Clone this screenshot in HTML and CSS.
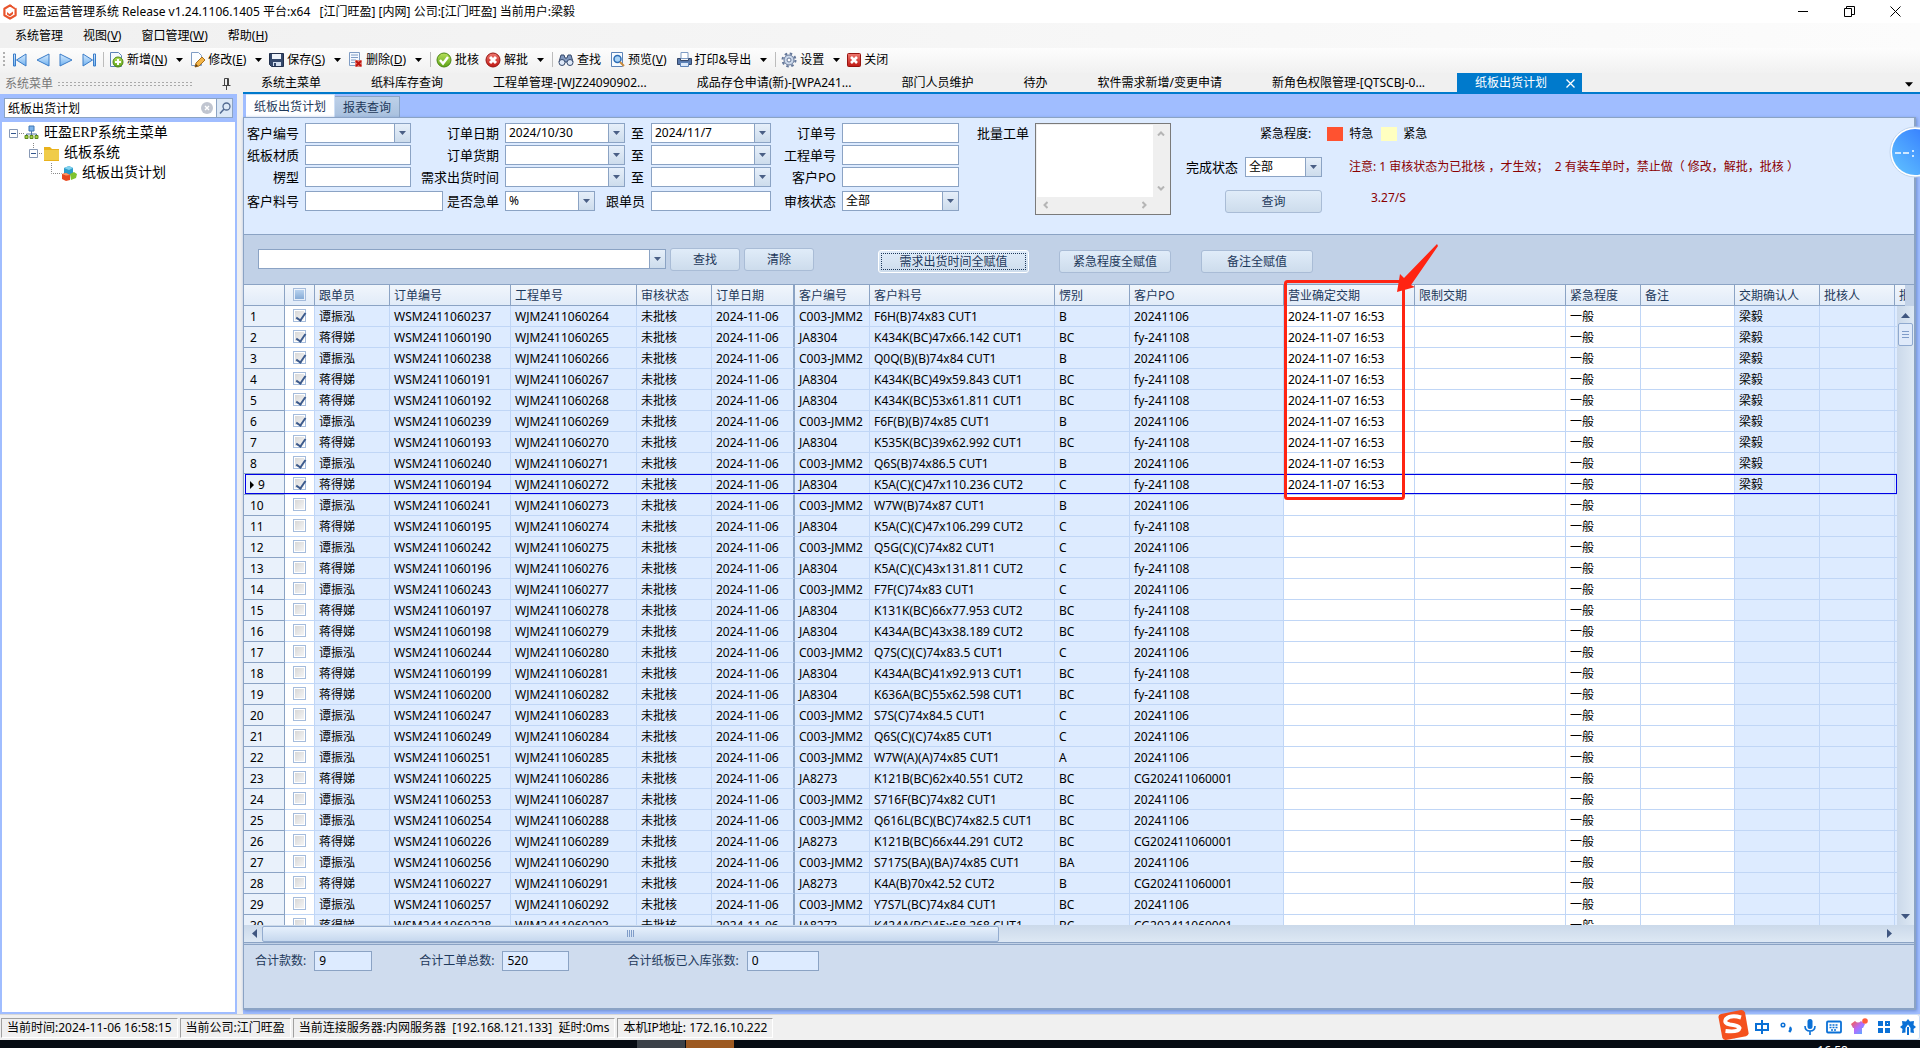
FILE: index.html
```html
<!DOCTYPE html>
<html lang="zh-CN">
<head>
    <meta charset="UTF-8">
    <meta name="viewport" content="width=device-width, initial-scale=1.0">
    <title>旺盈运营管理系统</title>
    <link rel="stylesheet" href="styles.css">
</head>
<body>

    <!-- Shared gradients and symbols -->
    <svg class="defs" width="0" height="0" aria-hidden="true">
        <defs>
            <linearGradient id="gBlue" x1="0" y1="0" x2="0" y2="1"><stop offset="0" stop-color="#d8ecff"/><stop offset="1" stop-color="#6fb0ee"/></linearGradient>
            <linearGradient id="gGreen" x1="0" y1="0" x2="0" y2="1"><stop offset="0" stop-color="#b6e05a"/><stop offset="1" stop-color="#5ea318"/></linearGradient>
            <linearGradient id="gRed" x1="0" y1="0" x2="0" y2="1"><stop offset="0" stop-color="#ef7a72"/><stop offset="1" stop-color="#bf1712"/></linearGradient>
            <linearGradient id="gOrb" x1="0" y1="1" x2="1" y2="0"><stop offset="0" stop-color="#62c4ff"/><stop offset="1" stop-color="#2f74ff"/></linearGradient>
            <linearGradient id="gShirt" x1="0" y1="0" x2="1" y2="1"><stop offset="0" stop-color="#ff5b3a"/><stop offset="0.5" stop-color="#b36bff"/><stop offset="1" stop-color="#49b8ff"/></linearGradient>
        </defs>
        <symbol id="down" viewBox="0 0 7 4"><path d="M0 0h7L3.5 4z"/></symbol>
    </svg>

    <!-- Title bar -->
    <header class="title-bar">
        <svg class="app-logo" viewBox="0 0 16 16" width="16" height="16"><path d="M8 1.4l5.6 3.3v6.6L8 14.6l-5.6-3.3V4.7z" fill="none" stroke="#e8542c" stroke-width="2.2" stroke-linejoin="round"/><path d="M5 8l2.5 2L11 7.500V10l-3 2.500L5 10.500z" fill="#e8542c"/><path d="M10 1l4 3" stroke="#fff" stroke-width="1"/></svg>
        <h1>旺盈运营管理系统 Release v1.24.1106.1405 平台:x64&nbsp;&nbsp; [江门旺盈] [内网] 公司:[江门旺盈] 当前用户:梁毅</h1>
        <div class="win-controls">
            <button type="button" aria-label="最小化"><svg width="11" height="11" viewBox="0 0 11 11"><path d="M0 5.500h10"/></svg></button>
            <button type="button" aria-label="还原"><svg width="11" height="11" viewBox="0 0 11 11"><path d="M.5 2.500h7v8h-7zM2.500 2.500v-2h8v8h-3"/></svg></button>
            <button type="button" aria-label="关闭窗口"><svg width="11" height="11" viewBox="0 0 11 11"><path d="M.5.5l10 10M10.500.5l-10 10"/></svg></button>
        </div>
    </header>

    <nav class="menu-bar">
        <button type="button">系统管理</button>
        <button type="button">视图(<u>V</u>)</button>
        <button type="button">窗口管理(<u>W</u>)</button>
        <button type="button">帮助(<u>H</u>)</button>
    </nav>

    <!-- Toolbar -->
    <div class="tool-bar">
        <span class="grip"></span>
        <button type="button" class="nav-btn" aria-label="首条"><svg width="16" height="14" viewBox="0 0 16 14"><path d="M1.500 1h2v12h-2zM14 1v12L4.500 7z" fill="url(#gBlue)" stroke="#3a7cc8"/></svg></button>
        <button type="button" class="nav-btn" aria-label="上一条"><svg width="16" height="14" viewBox="0 0 16 14"><path d="M14 1v12L2 7z" fill="url(#gBlue)" stroke="#3a7cc8"/></svg></button>
        <button type="button" class="nav-btn" aria-label="下一条"><svg width="16" height="14" viewBox="0 0 16 14"><path d="M2 1v12l12-6z" fill="url(#gBlue)" stroke="#3a7cc8"/></svg></button>
        <button type="button" class="nav-btn" aria-label="末条"><svg width="16" height="14" viewBox="0 0 16 14"><path d="M2 1v12l9.500-6zM12.500 1h2v12h-2z" fill="url(#gBlue)" stroke="#3a7cc8"/></svg></button>
        <span class="sep"></span>
        <button type="button" class="tool-btn"><svg width="15" height="16" viewBox="0 0 15 16"><path d="M1.500.5h8l3 3v11h-11z" fill="#f5f9ff" stroke="#5c83b8"/><circle cx="9" cy="10" r="5" fill="url(#gGreen)" stroke="#4c8613"/><path d="M9 7v6M6 10h6" stroke="#fff" stroke-width="2"/></svg><span>新增(<u>N</u>)</span></button>
        <button type="button" class="drop" aria-label="新增选项"><svg width="7" height="4"><use href="#down"/></svg></button>
        <button type="button" class="tool-btn"><svg width="15" height="16" viewBox="0 0 15 16"><path d="M1.500.5h7l3 3v10h-10z" fill="#fbfdff" stroke="#7f9cc4"/><path d="M5 15l1-4 6-6 3 3-6 6z" fill="#f3b548" stroke="#a86f1c"/><path d="M5 15l1-3 2 2z" fill="#5b3b16"/></svg><span>修改(<u>E</u>)</span></button>
        <button type="button" class="drop" aria-label="修改选项"><svg width="7" height="4"><use href="#down"/></svg></button>
        <button type="button" class="tool-btn"><svg width="15" height="16" viewBox="0 0 15 16"><path d="M.5 1.500h14v13h-12l-2-2z" fill="#34486b" stroke="#22304c"/><path d="M3 2h9v5H3z" fill="#eef3fa"/><path d="M4 10h8v4H4z" fill="#d3deee"/><path d="M5 11h2v3H5z" fill="#34486b"/></svg><span>保存(<u>S</u>)</span></button>
        <button type="button" class="drop" aria-label="保存选项"><svg width="7" height="4"><use href="#down"/></svg></button>
        <button type="button" class="tool-btn"><svg width="15" height="16" viewBox="0 0 15 16"><path d="M1.500.5h10v13h-10z" fill="#f5f9ff" stroke="#7f9cc4"/><path d="M3 3h7M3 5.500h7M3 8h5M3 10.500h4" stroke="#7f9cc4"/><path d="M7 8h7v7H7z" fill="#e08a84"/><path d="M8 9l5 5M13 9l-5 5" stroke="#c3130d" stroke-width="2"/></svg><span>删除(<u>D</u>)</span></button>
        <button type="button" class="drop" aria-label="删除选项"><svg width="7" height="4"><use href="#down"/></svg></button>
        <span class="sep"></span>
        <button type="button" class="tool-btn"><svg width="16" height="16" viewBox="0 0 16 16"><circle cx="8" cy="8" r="7" fill="url(#gGreen)" stroke="#4c8613"/><path d="M4 8l3 3.500L12 5" fill="none" stroke="#fff" stroke-width="2.400"/></svg><span>批核</span></button>
        <button type="button" class="tool-btn"><svg width="16" height="16" viewBox="0 0 16 16"><circle cx="8" cy="8" r="7" fill="url(#gRed)" stroke="#961410"/><path d="M5 5l6 6M11 5l-6 6" stroke="#fff" stroke-width="3"/></svg><span>解批</span></button>
        <button type="button" class="drop" aria-label="解批选项"><svg width="7" height="4"><use href="#down"/></svg></button>
        <span class="sep"></span>
        <button type="button" class="tool-btn"><svg width="16" height="16" viewBox="0 0 16 16"><path d="M3 3h3l1 3h2l1-3h3l2 7H1z" fill="#8299bf" stroke="#34486b"/><circle cx="4" cy="10.500" r="3" fill="#dfe9f8" stroke="#34486b"/><circle cx="12" cy="10.500" r="3" fill="#dfe9f8" stroke="#34486b"/></svg><span>查找</span></button>
        <button type="button" class="tool-btn view-btn"><svg width="14" height="16" viewBox="0 0 14 16"><path d="M.5.5h11v14H.5z" fill="#f7fbff" stroke="#5c83b8"/><circle cx="6.500" cy="7" r="3.500" fill="#a9d3f7" stroke="#2d6cb5" stroke-width="1.500"/><path d="M9 10l4 4" stroke="#c98a3c" stroke-width="2"/></svg><span>预览(<u>V</u>)</span></button>
        <button type="button" class="tool-btn view-btn"><svg width="15" height="16" viewBox="0 0 15 16"><path d="M4 .5h7v6H4z" fill="#fff" stroke="#7f9cc4"/><path d="M.5 6.500h3v2h8v-2h3v6H.5z" fill="#5878ab" stroke="#34486b"/><path d="M3.500 10.500h8v4h-8z" fill="#dbe9fb" stroke="#5c83b8"/></svg><span>打印&amp;导出</span></button>
        <button type="button" class="drop" aria-label="打印选项"><svg width="7" height="4"><use href="#down"/></svg></button>
        <span class="sep"></span>
        <button type="button" class="tool-btn"><svg width="16" height="16" viewBox="0 0 16 16"><circle cx="8" cy="8" r="6.500" fill="none" stroke="#65789a" stroke-width="2" stroke-dasharray="2.500 2.600"/><circle cx="8" cy="8" r="5" fill="#ccd8ea" stroke="#65789a"/><circle cx="8" cy="8" r="2" fill="#fff" stroke="#65789a"/></svg><span>设置</span></button>
        <button type="button" class="drop" aria-label="设置选项"><svg width="7" height="4"><use href="#down"/></svg></button>
        <button type="button" class="tool-btn"><svg width="14" height="14" viewBox="0 0 14 14"><rect x=".5" y=".5" width="13" height="13" rx="1" fill="url(#gRed)" stroke="#961410"/><path d="M4 4l6 6M10 4l-6 6" stroke="#fff" stroke-width="2.600"/></svg><span>关闭</span></button>
    </div>

    <main class="workspace">

        <!-- Menu tree -->
        <aside class="side">
            <div class="dock-head">
                <span>系统菜单</span>
                <span class="dots"></span>
                <svg width="9" height="12" viewBox="0 0 9 12"><path d="M2.500 7V.5h4V7M5.500 1v6M.5 7.500h8M4.500 8v4" fill="none" stroke="#444"/></svg>
            </div>
            <div class="side-search">
                <input type="text" value="纸板出货计划" aria-label="菜单搜索">
                <button type="button" class="clear" aria-label="清空"><svg width="12" height="12" viewBox="0 0 12 12"><circle cx="6" cy="6" r="6" fill="#c0c5d0"/><path d="M4 4l4 4M8 4L4 8" stroke="#fff" stroke-width="1.400"/></svg></button>
                <button type="button" class="go" aria-label="搜索"><svg width="12" height="12" viewBox="0 0 12 12"><circle cx="7.500" cy="4.500" r="3.500" fill="none" stroke="#526a91" stroke-width="1.300"/><path d="M5 7l-4 4.500" stroke="#526a91" stroke-width="1.500"/></svg></button>
            </div>
            <ul class="tree">
                <li>
                    <svg width="32" height="20" viewBox="0 0 32 20"><path d="M1.500 6.500h8v8h-8z" fill="#fff" stroke="#8899b5"/><path d="M3 10.500h5" stroke="#33578f"/><path d="M11 10.500h5" stroke="#888" stroke-dasharray="1 1"/><path d="M23.500 8v5M18.500 13v-2h10v2" fill="none" stroke="#53749f"/><path d="M21 3h5v5h-5z" fill="#7db3ea" stroke="#3f76b4"/><path d="M17 12.500h3v3h-3zM22 12.500h3v3h-3zM27 12.500h3v3h-3z" fill="#a5cf46" stroke="#5c8b1c"/></svg>
                    <span>旺盈ERP系统主菜单</span>
                </li>
                <li class="level-2">
                    <svg width="32" height="20" viewBox="0 0 32 20"><path d="M5.500 0v5M11 10.500h4" stroke="#888" stroke-dasharray="1 1"/><path d="M1.500 6.500h8v8h-8z" fill="#fff" stroke="#8899b5"/><path d="M3 10.500h5" stroke="#33578f"/><path d="M16 4h6l2 2h7v12H16z" fill="#e9b21c"/><path d="M16 7h15v10H16z" fill="#f0cc49"/></svg>
                    <span>纸板系统</span>
                </li>
                <li class="level-3">
                    <svg width="28" height="20" viewBox="0 0 28 20"><path d="M1.500 0v10.500h10" fill="none" stroke="#888" stroke-dasharray="1 1"/><path d="M14 5l5-2 4 2v6l-4 2-5-2z" fill="#2d9bc9"/><path d="M14 5l5 2 4-2-4-2z" fill="#82d2ee"/><path d="M12 11l4-1 4 2v5l-4 1-4-2z" fill="#e8481f"/><path d="M12 11l4 1.500 4-.5-4-2z" fill="#ff9b6b"/><path d="M20 11l4-2 3 2-1 4-5 2z" fill="#7fc32f"/></svg>
                    <span>纸板出货计划</span>
                </li>
            </ul>
        </aside>

        <section class="content">

            <!-- Open documents -->
            <nav class="doc-tabs">
                <button type="button">系统主菜单</button>
                <button type="button">纸料库存查询</button>
                <button type="button">工程单管理-[WJZ24090902...</button>
                <button type="button">成品存仓申请(新)-[WPA241...</button>
                <button type="button">部门人员维护</button>
                <button type="button">待办</button>
                <button type="button">软件需求新增/变更申请</button>
                <button type="button">新角色权限管理-[QTSCBJ-0...</button>
                <button type="button" class="active">纸板出货计划<svg width="9" height="9" viewBox="0 0 9 9"><path d="M.5.5l8 8M8.500.5l-8 8" stroke="#fff" stroke-width="1.300"/></svg></button>
                <button type="button" class="more" aria-label="更多标签"><svg width="8" height="5"><use href="#down"/></svg></button>
            </nav>

            <div class="page">
                <div class="page-tabs">
                    <button type="button" class="active">纸板出货计划</button>
                    <button type="button">报表查询</button>
                </div>

                <div class="page-body">
                    <!-- Query conditions -->
                    <form class="filter">
                        <div class="fields">
                            <label for="custNo" class="c1">客户编号</label>
                            <span class="combo c2"><input type="text" id="custNo"><button type="button" aria-label="选择客户"><svg width="7" height="4"><use href="#down"/></svg></button></span>
                            <label for="orderFrom" class="c3">订单日期</label>
                            <span class="combo c4"><input type="text" id="orderFrom" value="2024/10/30"><button type="button" aria-label="选择日期"><svg width="7" height="4"><use href="#down"/></svg></button></span>
                            <label for="orderTo" class="c5">至</label>
                            <span class="combo c6"><input type="text" id="orderTo" value="2024/11/7"><button type="button" aria-label="选择日期"><svg width="7" height="4"><use href="#down"/></svg></button></span>
                            <label for="orderNo" class="c7">订单号</label>
                            <input type="text" id="orderNo" class="box c8">

                            <label for="material" class="c1">纸板材质</label>
                            <input type="text" id="material" class="box c2">
                            <label for="dueFrom" class="c3">订单货期</label>
                            <span class="combo c4"><input type="text" id="dueFrom"><button type="button" aria-label="选择日期"><svg width="7" height="4"><use href="#down"/></svg></button></span>
                            <label for="dueTo" class="c5">至</label>
                            <span class="combo c6"><input type="text" id="dueTo"><button type="button" aria-label="选择日期"><svg width="7" height="4"><use href="#down"/></svg></button></span>
                            <label for="projNo" class="c7">工程单号</label>
                            <input type="text" id="projNo" class="box c8">

                            <label for="flute" class="c1">楞型</label>
                            <input type="text" id="flute" class="box c2">
                            <label for="shipFrom" class="c3">需求出货时间</label>
                            <span class="combo c4"><input type="text" id="shipFrom"><button type="button" aria-label="选择日期"><svg width="7" height="4"><use href="#down"/></svg></button></span>
                            <label for="shipTo" class="c5">至</label>
                            <span class="combo c6"><input type="text" id="shipTo"><button type="button" aria-label="选择日期"><svg width="7" height="4"><use href="#down"/></svg></button></span>
                            <label for="custPo" class="c7">客户PO</label>
                            <input type="text" id="custPo" class="box c8">

                            <label for="custPart" class="c1">客户料号</label>
                            <input type="text" id="custPart" class="box c2 wide">
                            <label for="urgent" class="c3">是否急单</label>
                            <div class="c4 follow">
                                <span class="combo"><select id="urgent"><option>%</option></select><svg class="mark" width="7" height="4"><use href="#down"/></svg></span>
                                <label for="follower">跟单员</label>
                            </div>
                            <input type="text" id="follower" class="box c6">
                            <label for="audit" class="c7">审核状态</label>
                            <span class="combo c8"><select id="audit"><option>全部</option></select><svg class="mark" width="7" height="4"><use href="#down"/></svg></span>

                            <label for="batch" class="c9">批量工单</label>
                            <div class="batch">
                                <textarea id="batch"></textarea>
                                <span class="bar-v"><svg width="8" height="5" viewBox="0 0 8 5"><path d="M1 4.500l3-3 3 3"/></svg><svg width="8" height="5" viewBox="0 0 8 5"><path d="M1 .5l3 3 3-3"/></svg></span>
                                <span class="bar-h"><svg width="5" height="8" viewBox="0 0 5 8"><path d="M4.500 1l-3 3 3 3"/></svg><svg width="5" height="8" viewBox="0 0 5 8"><path d="M.5 1l3 3-3 3"/></svg></span>
                            </div>
                        </div>

                        <div class="extra">
                            <div class="legend">
                                <span>紧急程度:</span>
                                <i class="red"></i><span>特急</span>
                                <i class="yellow"></i><span>紧急</span>
                            </div>
                            <div class="state">
                                <label for="finish">完成状态</label>
                                <span class="combo"><select id="finish"><option>全部</option></select><svg class="mark" width="7" height="4"><use href="#down"/></svg></span>
                                <p class="note">注意: 1 审核状态为已批核 ，才生效；&nbsp; 2 有装车单时，禁止做（ 修改，解批，批核 ）</p>
                            </div>
                            <div class="run">
                                <button type="button" class="btn">查询</button>
                                <p class="note">3.27/S</p>
                            </div>
                        </div>
                    </form>

                    <!-- Grid actions -->
                    <div class="actions">
                        <span class="combo search"><input type="text" aria-label="查找内容"><button type="button" aria-label="历史记录"><svg width="7" height="4"><use href="#down"/></svg></button></span>
                        <button type="button" class="btn small">查找</button>
                        <button type="button" class="btn small">清除</button>
                        <div class="fill">
                            <button type="button" class="btn focus">需求出货时间全赋值</button>
                            <button type="button" class="btn">紧急程度全赋值</button>
                            <button type="button" class="btn">备注全赋值</button>
                        </div>
                    </div>

                    <!-- Order grid -->
                    <div class="grid-area">
                        <div class="grid-clip">
                            <table class="grid">
                                <colgroup>
                                    <col class="w-no"><col class="w-check"><col class="w-75"><col class="w-order"><col class="w-proj">
                                    <col class="w-75"><col class="w-date"><col class="w-75"><col class="w-part"><col class="w-75">
                                    <col class="w-po"><col class="w-due"><col class="w-limit"><col class="w-75"><col class="w-memo">
                                    <col class="w-sure"><col class="w-75"><col>
                                </colgroup>
                                <thead>
                                    <tr>
                                        <th></th><th class="check"><input type="checkbox" class="all" aria-label="全选"></th><th>跟单员</th><th>订单编号</th><th>工程单号</th>
                                        <th>审核状态</th><th class="fixed">订单日期</th><th>客户编号</th><th>客户料号</th><th>愣别</th>
                                        <th>客户PO</th><th>营业确定交期</th><th>限制交期</th><th>紧急程度</th><th>备注</th>
                                        <th>交期确认人</th><th>批核人</th><th class="last">批核</th>
                                    </tr>
                                </thead>
                                <tbody id="rows"></tbody>
                            </table>
                            <div class="scroll-v">
                                <svg width="9" height="5" viewBox="0 0 9 5"><path d="M0 5h9L4.500 0z"/></svg>
                                <span class="thumb"></span>
                                <svg width="9" height="5" viewBox="0 0 9 5"><path d="M0 0h9L4.500 5z"/></svg>
                            </div>
                        </div>
                        <svg class="callout" width="162" height="260" viewBox="0 0 162 260">
                            <rect x="5.500" y="37.500" width="118" height="217" rx="2"/>
                            <path d="M157 0l1 2-27 39 4 2-18 5 3-18 4 4z"/>
                        </svg>
                    </div>

                    <div class="scroll-h">
                        <svg width="5" height="9" viewBox="0 0 5 9"><path d="M5 0v9L0 4.500z"/></svg>
                        <div class="track"><span class="thumb"></span></div>
                        <svg width="5" height="9" viewBox="0 0 5 9"><path d="M0 0v9l5-4.500z"/></svg>
                    </div>

                    <div class="summary">
                        <label for="sumCount">合计款数:</label><input type="text" id="sumCount" value="9" readonly>
                        <label for="sumOrder">合计工单总数:</label><input type="text" id="sumOrder" value="520" readonly>
                        <label for="sumStock">合计纸板已入库张数:</label><input type="text" id="sumStock" value="0" readonly>
                    </div>
                </div>
            </div>
        </section>
    </main>

    <!-- Status bar -->
    <footer class="status">
        <span>当前时间:2024-11-06 16:58:15</span>
        <span>当前公司:江门旺盈</span>
        <span>当前连接服务器:内网服务器&nbsp; [192.168.121.133]&nbsp; 延时:0ms</span>
        <span>本机IP地址: 172.16.10.222</span>
        <div class="ime">
            <svg class="sogou" width="32" height="32" viewBox="0 0 32 32"><path d="M4 5L24 1q3-.4 4 2.500l3.500 20q.5 3-2.500 3.700L9 31q-3 .5-3.700-2.400L1.500 8.500Q1 5.700 4 5z" fill="#f4511e"/><path d="M24 8.500Q14 5.500 9 10q-2.500 4.500 4 5.500 8.500.8 9.500 3.500-1 4.500-14 3" fill="none" stroke="#fff" stroke-width="4"/></svg>
            <svg width="16" height="16" viewBox="0 0 16 16"><path d="M2 5h12v6H2zM8 1v14" fill="none" stroke="#0a70d6" stroke-width="2"/></svg>
            <svg width="16" height="16" viewBox="0 0 16 16"><circle cx="5" cy="6" r="1.800" fill="none" stroke="#0a70d6" stroke-width="1.500"/><path d="M11.500 8.500q2.500 1-.3 4.500" fill="none" stroke="#0a70d6" stroke-width="2.600"/></svg>
            <svg width="16" height="16" viewBox="0 0 16 16"><rect x="5.500" y="0" width="5" height="10" rx="2.500" fill="#0a70d6"/><path d="M3 7q0 5 5 5t5-5M8 12v4" fill="none" stroke="#0a70d6" stroke-width="1.600"/></svg>
            <svg width="16" height="16" viewBox="0 0 16 16"><rect x="1" y="2.500" width="14" height="11" rx="1" fill="none" stroke="#0a70d6" stroke-width="1.800"/><path d="M3.500 6h9M3.500 8.500h9M5 11h6" stroke="#0a70d6" stroke-width="1.500" stroke-dasharray="2 1"/></svg>
            <svg width="18" height="18" viewBox="0 0 18 18"><path d="M1 6l4-3q3 3 6 0l4 3-2 4h-1v6H4v-6H3z" fill="url(#gShirt)"/><circle cx="15" cy="3" r="2.800" fill="#ff5b3a"/></svg>
            <svg width="16" height="16" viewBox="0 0 16 16"><path d="M2 2h5v5H2zM2 9h5v5H2zM9 9h5v5H9z" fill="#0a70d6"/><path d="M10 3h3v3h-3z" fill="none" stroke="#0a70d6" stroke-width="2"/></svg>
            <svg width="16" height="16" viewBox="0 0 16 16"><path d="M8 0l2 2.500 4-.5-.5 4L16 8l-2.500 2 .5 4-3.500-.5V9L8 5.500 5.500 9v4.500L2 14l.5-4L0 8l2.500-2L2 2l4 .5z" fill="#0a70d6"/><path d="M8 8v8" stroke="#0a70d6" stroke-width="2"/></svg>
        </div>
    </footer>

    <div class="task-bar"><i class="task"></i><i class="task on"></i><span>16:58</span></div>

    <svg class="orb" width="56" height="56" viewBox="0 0 56 56"><circle cx="28" cy="28" r="25" fill="#fff" stroke="#c3d6ee"/><circle cx="28" cy="28" r="23" fill="url(#gOrb)"/><path d="M8 29h6M16 29h6" stroke="#cfe8ff" stroke-width="2"/><path d="M25 26h2v2h-2zM25 31h2v2h-2z" fill="#cfe8ff"/></svg>

    <script src="script.js"></script>
</body>
</html>
```

FILE: styles.css
```css
* {
    margin: 0;
    padding: 0;
    box-sizing: border-box;
}

html, body {
    height: 100%;
}

body {
    display: flex;
    flex-direction: column;
    overflow: hidden;
    position: relative;
    font-family: "Noto Sans", "Noto Sans CJK SC", sans-serif;
    font-size: 12px;
    line-height: 16px;
    color: #000;
    background-color: #f0f0f0;
}

button, input, select, textarea {
    font: inherit;
    color: inherit;
    border: none;
    background: none;
    outline: none;
}

button {
    display: flex;
    align-items: center;
    white-space: nowrap;
}

svg {
    flex: none;
    display: block;
}

.defs {
    position: absolute;
}

/* Title, menu and toolbar */
.title-bar {
    display: flex;
    align-items: center;
    height: 23px;
    padding: 0 2px;
    background-color: #fff;
    flex: none;
}

.title-bar h1 {
    flex: 1;
    margin-left: 5px;
    font-size: 12px;
    font-weight: normal;
    white-space: pre;
}

.win-controls {
    display: flex;
    height: 20px;
}

.win-controls button {
    width: 46px;
    justify-content: center;
}

.win-controls svg {
    fill: none;
    stroke: #000;
}

.menu-bar {
    display: flex;
    align-items: center;
    gap: 20px;
    height: 25px;
    padding-left: 15px;
    background: linear-gradient(to right, #f0f0f0, #fcfcfc);
    flex: none;
}

.tool-bar {
    display: flex;
    align-items: center;
    height: 25px;
    padding: 0 0 2px 3px;
    background: linear-gradient(#fdfdfd, #f1f1f1);
    flex: none;
}

.grip {
    width: 2px;
    height: 16px;
    margin-right: 3px;
    background: repeating-linear-gradient(#b0b0b0 0 2px, transparent 2px 4px);
}

.nav-btn {
    width: 23px;
    justify-content: center;
}

.sep {
    width: 1px;
    height: 15px;
    margin: 0 3px 0 3px;
    background-color: #bcbcbc;
}

.tool-btn {
    gap: 3px;
    padding: 0 2px;
    margin-right: 2px;
}

.view-btn {
    margin-left: 4px;
}

.drop {
    width: 17px;
    height: 20px;
    justify-content: center;
}

/* Work area */
.workspace {
    flex: 1;
    min-height: 0;
    display: flex;
}

.side {
    width: 237px;
    margin-right: 6px;
    display: flex;
    flex-direction: column;
    flex: none;
}

.dock-head {
    display: flex;
    align-items: center;
    gap: 4px;
    height: 21px;
    padding: 0 6px 0 5px;
    color: #777;
}

.dots {
    flex: 1;
    height: 6px;
    margin-right: 24px;
    background-image: radial-gradient(#aaa 1px, transparent 1px);
    background-size: 4px 3px;
}

.side-search {
    display: flex;
    align-items: center;
    height: 28px;
    padding: 4px;
    background-color: #a0bdff;
}

.side-search input {
    flex: 1;
    min-width: 0;
    height: 20px;
    padding: 0 3px;
    border: 1px solid #8ba3c4;
    border-right: none;
    background-color: #fff;
}

.side-search .clear {
    height: 20px;
    padding: 0 3px;
    border: solid #8ba3c4;
    border-width: 1px 0;
    background-color: #fff;
}

.side-search .go {
    width: 17px;
    height: 20px;
    justify-content: center;
    border: 1px solid #8ba3c4;
    background-color: #dce8f6;
}

.tree {
    flex: 1;
    list-style: none;
    padding: 1px 0 0 6px;
    border: 2px solid #a0bdff;
    border-top: none;
    background-color: #fff;
    font-family: "Liberation Serif", "Noto Sans CJK SC", serif;
    font-size: 14px;
    line-height: 20px;
}

.tree li {
    display: flex;
    gap: 4px;
    height: 20px;
}

.tree .level-2 {
    padding-left: 20px;
}

.tree .level-3 {
    padding-left: 42px;
}

.content {
    flex: 1;
    min-width: 0;
    display: flex;
    flex-direction: column;
}

.doc-tabs {
    display: flex;
    height: 21px;
    border-bottom: 2px solid #007acc;
    flex: none;
}

.doc-tabs button {
    padding: 1px 32px 0 18px;
}

.doc-tabs .active {
    gap: 19px;
    padding-right: 7px;
    color: #fff;
    background-color: #007acc;
}

.doc-tabs .more {
    margin-left: auto;
    padding: 3px 7px 0;
}

.page {
    flex: 1;
    min-height: 0;
    display: flex;
    flex-direction: column;
    padding: 0 4px 4px 0;
    background-color: #a0bdff;
}

.page-tabs {
    display: flex;
    align-items: flex-end;
    height: 23px;
    padding-left: 3px;
    color: #1e395b;
    flex: none;
}

.page-tabs button {
    height: 21px;
    padding: 2px 8px 0;
    border: 1px solid #8ba3c4;
    border-left: none;
    border-bottom: none;
    background: linear-gradient(#bdd0e8, #a9c1de);
}

.page-tabs .active {
    height: 23px;
    border-color: #cfdff5;
    background: #fff;
}

.page-body {
    flex: 1;
    min-height: 0;
    display: flex;
    flex-direction: column;
    border: 1px solid #8ba3c4;
    border-right-width: 2px;
    border-bottom-width: 2px;
    box-shadow: 1px 1px 3px #6d8dd0;
    background-color: #c1d1e7;
}

/* Query conditions */
.filter {
    display: flex;
    gap: 15px;
    height: 117px;
    padding: 5px 0 0 5px;
    border-bottom: 1px solid #8ba3c4;
    background-color: #ddebff;
    flex: none;
}

.fields {
    display: grid;
    grid-template-columns: 50px 106px 82px 120px 14px 120px 59px 117px 64px 136px;
    grid-template-rows: 22px 22px 24px 24px;
    column-gap: 6px;
    align-items: start;
    flex: none;
}

.fields label, .legend, .state label {
    font-size: 13px;
    line-height: 20px;
    white-space: nowrap;
}

.c1 { grid-column: 1; justify-self: end; }
.c2 { grid-column: 2; }
.c3 { grid-column: 3; justify-self: end; }
.c4 { grid-column: 4; }
.c5 { grid-column: 5; }
.c6 { grid-column: 6; }
.c7 { grid-column: 7; justify-self: end; }
.c8 { grid-column: 8; }

.c9 {
    grid-column: 9;
    grid-row: 1;
    justify-self: end;
}

.box, .combo {
    height: 20px;
    min-width: 0;
    border: 1px solid #8ba3c4;
    background-color: #fff;
}

.box {
    padding: 0 3px;
}

.fields .wide {
    width: 138px;
}

.combo {
    display: flex;
}

.combo input, .combo select {
    flex: 1;
    min-width: 0;
    padding: 0 3px;
    appearance: none;
}

.combo button, .combo .mark {
    width: 16px;
    height: 18px;
    padding: 0 4px;
    justify-content: center;
    border-left: 1px solid #8ba3c4;
    background: linear-gradient(#e6effa, #cddcec);
    fill: #4a5f85;
}

.combo .mark {
    padding: 7px 4px;
    pointer-events: none;
}

.follow {
    grid-column: 4 / span 2;
    display: flex;
    justify-content: space-between;
}

.follow .combo {
    width: 90px;
}

.batch {
    grid-column: 10;
    grid-row: 1 / span 4;
    display: grid;
    grid-template-columns: 1fr 16px;
    grid-template-rows: 1fr 16px;
    height: 92px;
    padding: 1px;
    border: 1px solid #7a7a7a;
    background-color: #efefef;
}

.batch textarea {
    resize: none;
    background-color: #fff;
}

.batch svg {
    fill: none;
    stroke: #b5b5b5;
    stroke-width: 2;
}

.bar-v, .bar-h {
    display: flex;
    justify-content: space-between;
    align-items: center;
    padding: 6px;
}

.bar-v {
    flex-direction: column;
}

.extra {
    display: flex;
    flex-direction: column;
    white-space: nowrap;
}

.legend {
    display: flex;
    align-items: center;
    height: 22px;
    padding-left: 74px;
    font-size: 12px;
}

.legend i {
    width: 16px;
    height: 14px;
    margin-right: 6px;
}

.legend span + i {
    margin-left: 8px;
}

.legend .red {
    background-color: #ff5230;
}

.legend .yellow {
    background-color: #ffffc0;
}

.legend span:first-child {
    margin-right: 8px;
}

.state {
    display: flex;
    align-items: center;
    margin-top: 12px;
}

.state .combo {
    width: 77px;
    margin-left: 7px;
}

.note {
    color: #8b0000;
    margin-left: 27px;
}

.run {
    display: flex;
    margin: 13px 0 0 39px;
}

.run .btn {
    width: 97px;
}

.run .note {
    margin-left: 49px;
}

.btn {
    justify-content: center;
    height: 23px;
    border: 1px solid #a9bcd6;
    border-radius: 3px;
    color: #1e395b;
    background: linear-gradient(#e0ecf9, #cddcec);
}

/* Grid actions */
.actions {
    display: flex;
    gap: 4px;
    height: 49px;
    padding: 13px 0 0 14px;
    flex: none;
}

.actions .search {
    width: 408px;
    margin-top: 1px;
}

.actions .btn {
    width: 112px;
}

.actions .small {
    width: 70px;
}

.fill {
    display: flex;
    gap: 30px;
    margin: 2px 0 0 60px;
}

.actions .focus {
    width: 151px;
    border-color: #fff;
    outline: 1px dotted #1e395b;
    outline-offset: -4px;
}

/* Order grid */
.grid-area {
    flex: 1;
    min-height: 0;
    position: relative;
}

.grid-clip {
    height: 100%;
    overflow: hidden;
    position: relative;
    border-top: 1px solid #8ba3c4;
}

.grid {
    width: 100%;
    table-layout: fixed;
    border-collapse: separate;
    border-spacing: 0;
}

.w-no { width: 41px; }
.w-check { width: 30px; }
.w-75 { width: 75px; }
.w-order { width: 121px; }
.w-proj { width: 126px; }
.w-date { width: 83px; }
.w-part { width: 185px; }
.w-po { width: 154px; }
.w-due { width: 131px; }
.w-limit { width: 151px; }
.w-memo { width: 94px; }
.w-sure { width: 85px; }

.grid th, .grid td {
    height: 21px;
    padding: 2px 4px 0;
    border: solid #c0d6f6;
    border-width: 0 1px 1px 0;
    font-weight: normal;
    text-align: left;
    white-space: nowrap;
    overflow: hidden;
    background-color: #ddebff;
}

.grid th {
    border-color: #8ba3c4;
    color: #1e395b;
    background: linear-gradient(#f1f6fc, #e1ebf8);
}

.grid th.last {
    padding-right: 0;
    border-right: none;
}

.grid td:first-child {
    padding-left: 6px;
    border-color: #8ba3c4;
    background-color: #e9f1fb;
}

.grid td.edit, .grid td.check {
    background-color: #fff;
}

.grid .fixed {
    border-right: 2px solid #8ba3c4;
}

.grid .check {
    padding: 3px 0 0 8px;
    vertical-align: top;
}

.grid input {
    display: block;
    width: 13px;
    height: 13px;
    appearance: none;
    border: 1px solid #a5bcdc;
    background: linear-gradient(135deg, #d8d8d8, #f4f4f4) content-box;
    padding: 1px;
}

.grid input.all {
    background: linear-gradient(#b8d2ef, #86abd6) content-box;
}

.grid input:checked::after {
    content: "";
    display: block;
    width: 4px;
    height: 8px;
    margin: 0 0 0 3px;
    border: solid #3c5a8c;
    border-width: 0 2px 2px 0;
    transform: rotate(35deg);
}

.grid .current {
    position: relative;
}

.grid .current::after {
    content: "";
    position: absolute;
    inset: 0 17px 1px 1px;
    border: 1px solid #0000e6;
}

.grid .current td:first-child::before {
    content: "";
    display: inline-block;
    margin-right: 4px;
    border: solid transparent;
    border-width: 4px 0 4px 4px;
    border-left-color: #000;
}

.scroll-v {
    position: absolute;
    top: 21px;
    right: 0;
    bottom: 0;
    width: 17px;
    display: flex;
    flex-direction: column;
    align-items: center;
    padding: 7px 0 6px;
    background: linear-gradient(to right, #cbd9ea, #dde8f4);
    fill: #3f5680;
}

.scroll-v .thumb {
    width: 15px;
    height: 23px;
    margin: 5px 0 auto;
    border: 1px solid #8fa9cf;
    border-radius: 2px;
    background: repeating-linear-gradient(#7f9cc8 0 1px, transparent 1px 3px) center / 7px 8px no-repeat #dfeafa;
}

.scroll-h {
    display: flex;
    align-items: center;
    height: 18px;
    padding: 0 22px 0 8px;
    border-bottom: 1px solid #8ba3c4;
    background: linear-gradient(#cbd9ea, #dde8f4);
    fill: #3f5680;
    flex: none;
}

.scroll-h .track {
    flex: 1;
    margin: 0 5px;
}

.scroll-h .thumb {
    display: block;
    width: 45.5%;
    height: 16px;
    border: 1px solid #93accf;
    border-radius: 2px;
    background:
        repeating-linear-gradient(to right, #7f9cc8 0 1px, transparent 1px 2px) center / 8px 7px no-repeat,
        linear-gradient(#e6f0fc, #c6d8ee);
}

/* Red marker over the confirmed date column */
.callout {
    position: absolute;
    left: 1036px;
    top: -40px;
    overflow: visible;
    fill: #ff2412;
    pointer-events: none;
}

.callout rect {
    fill: none;
    stroke: #ff2412;
    stroke-width: 3;
}

.summary {
    display: flex;
    align-items: center;
    height: 64px;
    padding: 0 0 32px 11px;
    margin-top: 1px;
    border-top: 1px solid #8ba3c4;
    background-color: #cfdcee;
    color: #1e395b;
    flex: none;
}

.summary input {
    height: 20px;
    width: 58px;
    margin: 0 47px 0 8px;
    padding: 0 4px;
    border: 1px solid #8ba3c4;
    background-color: #ddebff;
    color: #000;
}

.summary #sumOrder {
    width: 67px;
    margin-right: 58px;
}

.summary #sumStock {
    width: 72px;
}

/* Status bar */
.status {
    position: relative;
    display: flex;
    align-items: center;
    gap: 2px;
    height: 26px;
    padding-left: 1px;
    border-top: 1px solid #d8d8d8;
    flex: none;
}

.status > span {
    height: 20px;
    padding: 1px 5px;
    border: 1px solid #fff;
    border-top-color: #a0a0a0;
    border-left-color: #a0a0a0;
    white-space: nowrap;
}

.ime {
    position: absolute;
    right: 0;
    top: -1px;
    display: flex;
    align-items: center;
    gap: 8px;
    width: 187px;
    height: 26px;
    padding-left: 20px;
    border: 1px solid #c9dcf5;
    border-radius: 3px;
    background-color: #fff;
}

.ime .sogou {
    position: absolute;
    left: -17px;
    top: -6px;
}

.task-bar {
    display: flex;
    height: 8px;
    padding: 0 72px 0 637px;
    overflow: hidden;
    background-color: #060b12;
    flex: none;
}

.task {
    width: 48px;
    height: 8px;
    margin-right: 1px;
    background-color: #3b4148;
}

.task.on {
    background-color: #9c5921;
}

.task-bar span {
    margin: 3px 0 0 auto;
    color: #fff;
}

.orb {
    position: absolute;
    right: -23px;
    top: 124px;
}
```

FILE: script.js
```js
// order no tail, part no, flute, customer
var TAN = '谭振泓', JIANG = '蒋得娣';

var orders = [
    ['237', 'F6H(B)74x83 CUT1', 'B', 'C003-JMM2'],
    ['190', 'K434K(BC)47x66.142 CUT1', 'BC', 'JA8304'],
    ['238', 'Q0Q(B)(B)74x84 CUT1', 'B', 'C003-JMM2'],
    ['191', 'K434K(BC)49x59.843 CUT1', 'BC', 'JA8304'],
    ['192', 'K434K(BC)53x61.811 CUT1', 'BC', 'JA8304'],
    ['239', 'F6F(B)(B)74x85 CUT1', 'B', 'C003-JMM2'],
    ['193', 'K535K(BC)39x62.992 CUT1', 'BC', 'JA8304'],
    ['240', 'Q6S(B)74x86.5 CUT1', 'B', 'C003-JMM2'],
    ['194', 'K5A(C)(C)47x110.236 CUT2', 'C', 'JA8304'],
    ['241', 'W7W(B)74x87 CUT1', 'B', 'C003-JMM2'],
    ['195', 'K5A(C)(C)47x106.299 CUT2', 'C', 'JA8304'],
    ['242', 'Q5G(C)(C)74x82 CUT1', 'C', 'C003-JMM2'],
    ['196', 'K5A(C)(C)43x131.811 CUT2', 'C', 'JA8304'],
    ['243', 'F7F(C)74x83 CUT1', 'C', 'C003-JMM2'],
    ['197', 'K131K(BC)66x77.953 CUT2', 'BC', 'JA8304'],
    ['198', 'K434A(BC)43x38.189 CUT2', 'BC', 'JA8304'],
    ['244', 'Q7S(C)(C)74x83.5 CUT1', 'C', 'C003-JMM2'],
    ['199', 'K434A(BC)41x92.913 CUT1', 'BC', 'JA8304'],
    ['200', 'K636A(BC)55x62.598 CUT1', 'BC', 'JA8304'],
    ['247', 'S7S(C)74x84.5 CUT1', 'C', 'C003-JMM2'],
    ['249', 'Q6S(C)(C)74x85 CUT1', 'C', 'C003-JMM2'],
    ['251', 'W7W(A)(A)74x85 CUT1', 'A', 'C003-JMM2'],
    ['225', 'K121B(BC)62x40.551 CUT2', 'BC', 'JA8273'],
    ['253', 'S716F(BC)74x82 CUT1', 'BC', 'C003-JMM2'],
    ['254', 'Q616L(BC)(BC)74x82.5 CUT1', 'BC', 'C003-JMM2'],
    ['226', 'K121B(BC)66x44.291 CUT2', 'BC', 'JA8273'],
    ['256', 'S717S(BA)(BA)74x85 CUT1', 'BA', 'C003-JMM2'],
    ['227', 'K4A(B)70x42.52 CUT2', 'B', 'JA8273'],
    ['257', 'Y7S7L(BC)74x84 CUT1', 'BC', 'C003-JMM2'],
    ['228', 'K424A(BC)45x58.268 CUT1', 'BC', 'JA8273']
];

var poByCustomer = {
    'C003-JMM2': '20241106',
    'JA8304': 'fy-241108',
    'JA8273': 'CG202411060001'
};

var html = '';
orders.forEach(function (o, i) {
    var done = i < 9;
    html += '<tr' + (i === 8 ? ' class="current"' : '') + '>' +
        '<td>' + (i + 1) + '</td>' +
        '<td class="check"><input type="checkbox" aria-label="选择第' + (i + 1) + '行"' + (done ? ' checked' : '') + '></td>' +
        '<td>' + (o[3] === 'C003-JMM2' ? TAN : JIANG) + '</td>' +
        '<td>WSM2411060' + o[0] + '</td>' +
        '<td>WJM2411060' + (264 + i) + '</td>' +
        '<td>未批核</td>' +
        '<td class="fixed">2024-11-06</td>' +
        '<td>' + o[3] + '</td>' +
        '<td>' + o[1] + '</td>' +
        '<td>' + o[2] + '</td>' +
        '<td>' + poByCustomer[o[3]] + '</td>' +
        '<td class="edit">' + (done ? '2024-11-07 16:53' : '') + '</td>' +
        '<td class="edit"></td>' +
        '<td class="edit">一般</td>' +
        '<td class="edit"></td>' +
        '<td>' + (done ? '梁毅' : '') + '</td>' +
        '<td></td><td></td></tr>';
});
document.getElementById('rows').innerHTML = html;
```
